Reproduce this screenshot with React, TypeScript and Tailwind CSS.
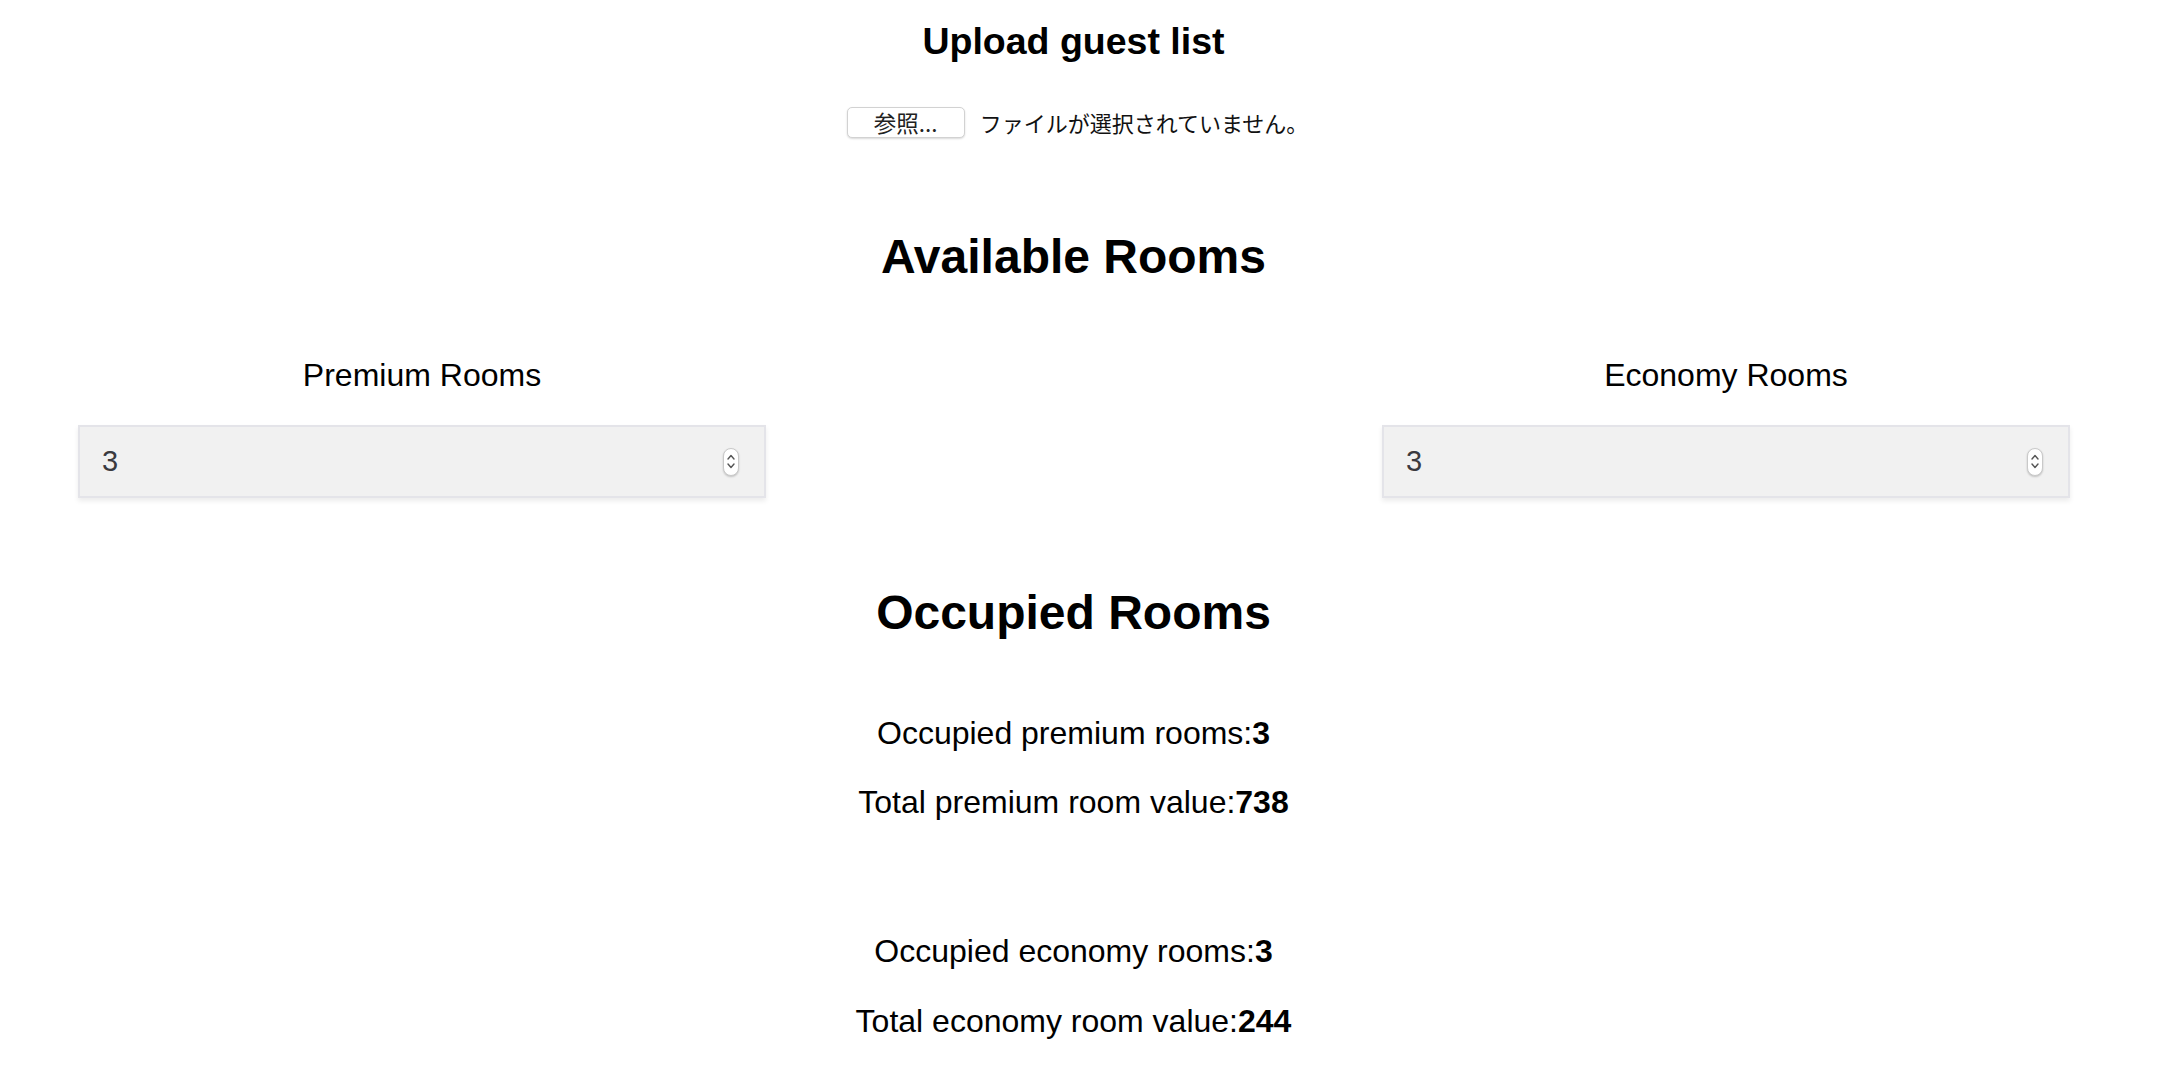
import React from "react";

function Spinner() {
  return (
    <div className="absolute right-[25px] top-1/2 -translate-y-1/2 w-[16px] h-[28px] rounded-full bg-white border border-[#c9c9c9] shadow-[0_1px_2px_rgba(0,0,0,0.2)] flex flex-col items-center justify-center gap-[3px]">
      <svg width="8" height="6" viewBox="0 0 8 6" fill="none">
        <path d="M1 5 L4 1.5 L7 5" stroke="#555" strokeWidth="1.4" strokeLinecap="round" strokeLinejoin="round" />
      </svg>
      <svg width="8" height="6" viewBox="0 0 8 6" fill="none">
        <path d="M1 1 L4 4.5 L7 1" stroke="#555" strokeWidth="1.4" strokeLinecap="round" strokeLinejoin="round" />
      </svg>
    </div>
  );
}

function RoomInput({ label, value }: { label: string; value: number }) {
  return (
    <div className="w-[688px] flex flex-col items-center">
      <div className="text-[32px] leading-[37px] text-black">{label}</div>
      <div className="relative mt-[31px] w-full h-[73px] bg-[#f1f1f1] border-2 border-[#e4e4e9] shadow-[0_3px_5px_rgba(0,0,0,0.08)] flex items-center">
        <span className="pl-[22px] text-[29px] leading-none text-[#3a3a3f]">{value}</span>
        <Spinner />
      </div>
    </div>
  );
}

function StatLine({ label, value, className }: { label: string; value: number; className?: string }) {
  return (
    <div className={"text-[32px] leading-[37px] text-black " + (className ?? "")}>
      {label}
      <span className="font-bold">{value}</span>
    </div>
  );
}

export default function App() {
  return (
    <div
      className="w-[2147px] min-h-[1088px] bg-white text-center text-black"
      style={{ fontFamily: '"Liberation Sans", Arial, "Noto Sans CJK JP", sans-serif' }}
    >
      <div className="pt-[20px]">
        <h3 className="text-[37.5px] leading-[43px] font-bold">Upload guest list</h3>
      </div>

      <div className="mt-[44px] flex justify-center items-center gap-[15px] pl-[8px]">
        <div
          className="w-[118px] h-[31px] bg-white border border-[#d2d2d2] rounded-[5px] shadow-[0_1px_2px_rgba(0,0,0,0.15)] flex items-center justify-center text-[22.5px] leading-none text-[#222]"
          style={{ fontFamily: '"Noto Sans CJK JP", sans-serif' }}
        >
          参照...
        </div>
        <div
          className="text-[22px] leading-[31px] text-[#111]"
          style={{ fontFamily: '"Noto Sans CJK JP", sans-serif' }}
        >
          ファイルが選択されていません。
        </div>
      </div>

      <h2 className="mt-[91px] text-[48px] leading-[55px] font-bold">Available Rooms</h2>

      <div className="mt-[73px] flex justify-between pl-[78px] pr-[77px]">
        <RoomInput label="Premium Rooms" value={3} />
        <RoomInput label="Economy Rooms" value={3} />
      </div>

      <h2 className="mt-[87px] text-[48px] leading-[55px] font-bold">Occupied Rooms</h2>

      <StatLine className="mt-[75px]" label="Occupied premium rooms:" value={3} />
      <StatLine className="mt-[32px]" label="Total premium room value:" value={738} />
      <StatLine className="mt-[112px]" label="Occupied economy rooms:" value={3} />
      <StatLine className="mt-[33px]" label="Total economy room value:" value={244} />
    </div>
  );
}
